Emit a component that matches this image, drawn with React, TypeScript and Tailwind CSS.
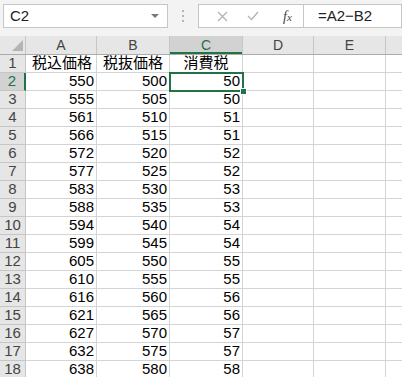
const rows: [number, number, number][] = [
  [550, 500, 50],
  [555, 505, 50],
  [561, 510, 51],
  [566, 515, 51],
  [572, 520, 52],
  [577, 525, 52],
  [583, 530, 53],
  [588, 535, 53],
  [594, 540, 54],
  [599, 545, 54],
  [605, 550, 55],
  [610, 555, 55],
  [616, 560, 56],
  [621, 565, 56],
  [627, 570, 57],
  [632, 575, 57],
  [638, 580, 58],
];

const font = { fontFamily: '"Liberation Sans", "Noto Sans CJK JP", sans-serif' };

const cols = [
  { key: "A", w: "w-[71px]" },
  { key: "B", w: "w-[73px]" },
  { key: "C", w: "w-[73px]" },
  { key: "D", w: "w-[71px]" },
  { key: "E", w: "w-[72px]" },
];

const Toolbar = () => (
  <div className="h-[36px] bg-[#f3f3f3] flex items-start pt-[4px] pl-[3px]">
    <div className="w-[165px] h-[24px] bg-white border border-[#c6c6c6] flex items-center justify-between pl-[6px] pr-[8px]">
      <span className="text-[15px] text-[#222]">C2</span>
      <span className="w-0 h-0 border-l-[4px] border-r-[4px] border-t-[4px] border-l-transparent border-r-transparent border-t-[#777]" />
    </div>
    <div className="w-[30px] h-[24px] flex flex-col items-center justify-center gap-[3px]">
      <span className="w-[2px] h-[2px] bg-[#b5b5b5]" />
      <span className="w-[2px] h-[2px] bg-[#b5b5b5]" />
      <span className="w-[2px] h-[2px] bg-[#b5b5b5]" />
    </div>
    <div className="flex-1 h-[24px] bg-white border border-[#c6c6c6] flex items-center">
      <div className="w-[105px] h-full flex items-center border-r border-[#c6c6c6]">
        <svg width="11" height="11" viewBox="0 0 11 11" className="ml-[18px]">
          <path d="M1 1 L10 10 M10 1 L1 10" stroke="#b3b3b3" strokeWidth="1.3" />
        </svg>
        <svg width="12" height="10" viewBox="0 0 12 10" className="ml-[19px]">
          <path d="M1 5 L4.5 8.5 L11 1" stroke="#b3b3b3" strokeWidth="1.3" fill="none" />
        </svg>
        <span
          className="ml-[24px] text-[14px] italic text-[#444]"
          style={{ fontFamily: '"Liberation Serif", serif' }}
        >
          f<span className="text-[11px]">x</span>
        </span>
      </div>
      <span className="ml-[14px] text-[15px] text-[#222]">=A2−B2</span>
    </div>
  </div>
);

const HeaderRow = () => (
  <div className="flex h-[19px] bg-[#e6e6e6] border-b border-[#ababab]">
    <div className="w-[26px] shrink-0 border-r border-[#c6c6c6] relative">
      <svg width="11" height="11" viewBox="0 0 11 11" className="absolute right-[2px] bottom-[3px]">
        <path d="M11 0 L11 11 L0 11 Z" fill="#b4b4b4" />
      </svg>
    </div>
    {cols.map((c) => (
      <div
        key={c.key}
        className={`${c.w} shrink-0 flex items-center justify-center text-[14px] border-r ${
          c.key === "C"
            ? "bg-[#d2d2d2] text-[#217346] border-[#c6c6c6] shadow-[inset_0_-2px_0_#217346]"
            : "text-[#444] border-[#c6c6c6]"
        }`}
      >
        {c.key}
      </div>
    ))}
    <div className="flex-1" />
  </div>
);

const RowHead = ({ n, active }: { n: number; active?: boolean }) => (
  <div
    className={`w-[26px] shrink-0 flex items-center justify-center text-[15px] border-r border-b ${
      active
        ? "bg-[#d2d2d2] text-[#217346] border-b-[#c6c6c6] border-r-[#217346] border-r-2"
        : "bg-[#e6e6e6] text-[#444] border-[#c6c6c6]"
    }`}
  >
    {n}
  </div>
);

const Cell = ({
  w,
  children,
  align = "right",
}: {
  w: string;
  children?: React.ReactNode;
  align?: "right" | "center" | "left";
}) => (
  <div
    className={`${w} shrink-0 h-full flex items-center border-r border-b border-[#d4d4d4] text-black ${
      align === "right" ? "justify-end pr-[2px] text-[15px]" : align === "center" ? "justify-center text-[15px]" : "justify-start pl-[6px] text-[15px]"
    }`}
  >
    {children}
  </div>
);

export default function App() {
  return (
    <div className="w-[402px] h-[377px] overflow-hidden bg-white" style={font}>
      <Toolbar />
      <HeaderRow />
      <div className="relative">
        <div className="flex h-[18px]">
          <RowHead n={1} />
          <Cell w="w-[71px]" align="left">税込価格</Cell>
          <Cell w="w-[73px]" align="left">税抜価格</Cell>
          <Cell w="w-[73px]" align="center">消費税</Cell>
          <Cell w="w-[71px]" />
          <Cell w="w-[72px]" />
          <div className="flex-1 border-b border-[#d4d4d4]" />
        </div>
        {rows.map((r, i) => (
          <div key={i} className="flex h-[18px]">
            <RowHead n={i + 2} active={i === 0} />
            <Cell w="w-[71px]">{r[0]}</Cell>
            <Cell w="w-[73px]">{r[1]}</Cell>
            <Cell w="w-[73px]">{r[2]}</Cell>
            <Cell w="w-[71px]" />
            <Cell w="w-[72px]" />
            <div className="flex-1 border-b border-[#d4d4d4]" />
          </div>
        ))}
        <div className="absolute left-[169px] top-[17px] w-[75px] h-[20px] border-2 border-[#217346] pointer-events-none" />
        <div className="absolute left-[240px] top-[33px] w-[7px] h-[7px] bg-[#217346] border border-white" />
      </div>
    </div>
  );
}
